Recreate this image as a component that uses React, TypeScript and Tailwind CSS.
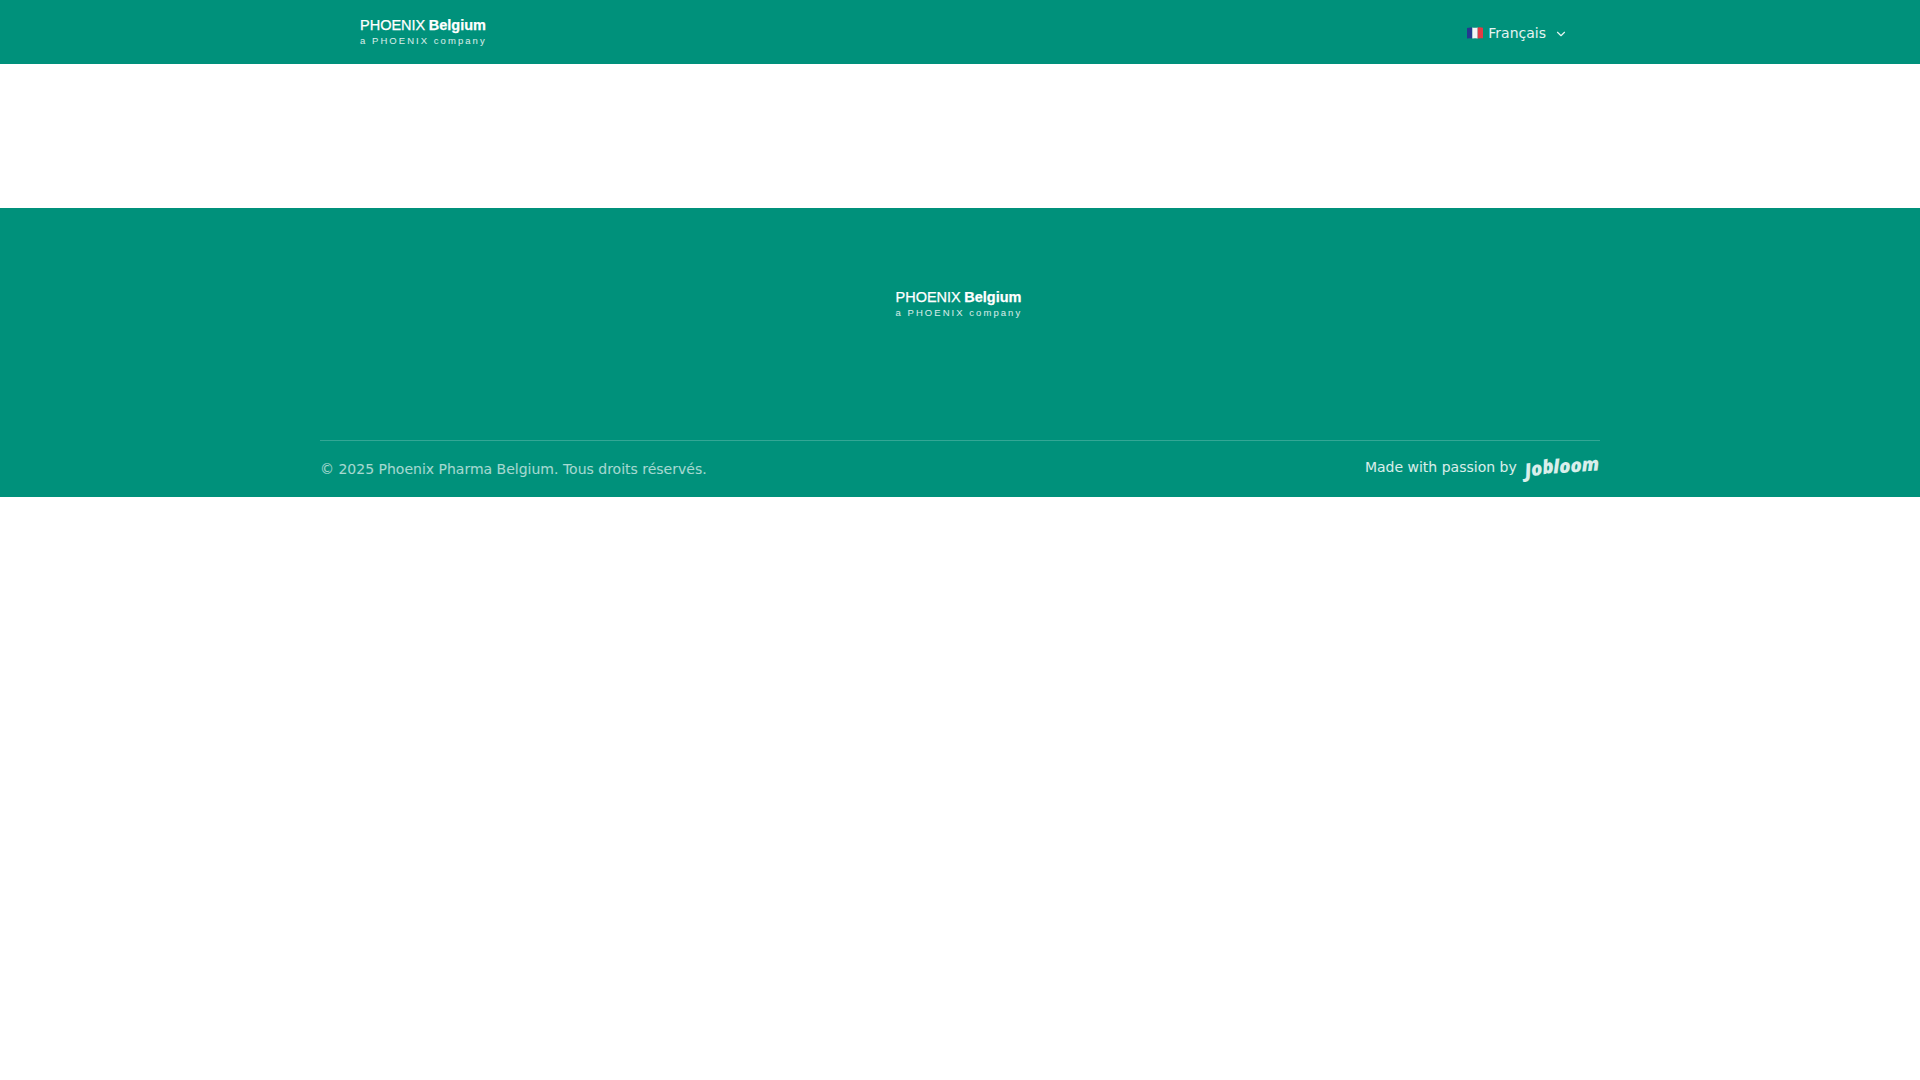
import React from "react";

function Logo() {
  return (
    <div className="flex h-[30px] w-[126px] flex-col text-white font-['Liberation_Sans',sans-serif] select-none">
      <div className="flex h-[17px] items-center justify-between whitespace-nowrap text-[14.5px] leading-[17px] [-webkit-text-stroke:0.25px_white]">
        <span className="font-normal">PHOENIX</span>
        <span className="font-bold">Belgium</span>
      </div>
      <div className="mt-[2px] h-[10px] whitespace-nowrap text-[9.5px] leading-[10px] tracking-[2.05px] text-white/85">
        a PHOENIX company
      </div>
    </div>
  );
}

function Flag() {
  return (
    <svg width="16" height="12" viewBox="0 0 16 12" className="block">
      <path d="M0 1 Q3 0 5.3 .6 V11.4 Q3 11 0 11.6Z" fill="#24398f" />
      <path d="M5.3 .6 Q8 1 10.7 .6 V11.4 Q8 11.2 5.3 11.4Z" fill="#f4f4f6" />
      <path d="M10.7 .6 Q13 0 16 .8 V11.2 Q13 11 10.7 11.4Z" fill="#e23b45" />
    </svg>
  );
}

export default function App() {
  return (
    <div className="min-h-[1080px] bg-white font-['DejaVu_Sans',sans-serif]">
      <header className="h-16 bg-[#00917b]">
        <div className="mx-auto flex h-16 w-[1280px] items-center justify-between pl-10 pr-8">
          <Logo />
          <div className="mt-[2px] flex items-center text-[14px] text-white/90">
            <Flag />
            <span className="ml-[5px] leading-5">Français</span>
            <svg width="14" height="14" viewBox="0 0 24 24" fill="none" stroke="currentColor" strokeWidth="2" strokeLinecap="round" strokeLinejoin="round" className="ml-2 mt-[2px]">
              <path d="m6 9 6 6 6-6" />
            </svg>
          </div>
        </div>
      </header>
      <main className="h-[144px] bg-white" />
      <footer className="h-[289px] bg-[#00917b]">
        <div className="mx-auto w-[1280px]">
          <div className="flex h-[232px] justify-center pr-[3px] pt-[81px]">
            <Logo />
          </div>
          <div className="flex h-[57px] items-start justify-between border-t border-white/20 pt-[18px] text-[14px] leading-5">
            <span className="text-white/65">© 2025 Phoenix Pharma Belgium. Tous droits réservés.</span>
            <div className="-mt-[4px] flex items-center pr-[1px] text-white/85">
              <span>Made with passion by</span>
              <span className="ml-[7px] flex items-center font-['Open_Sans',sans-serif] font-extrabold italic leading-5 text-white/85">
                <span className="mt-[3px] inline-block -rotate-[10deg] text-[19px] tracking-[-0.3px]">Job</span>
                <span className="-mt-[3px] inline-block -rotate-[4deg] text-[19px] tracking-[-0.2px]">loom</span>
              </span>
            </div>
          </div>
        </div>
      </footer>
    </div>
  );
}
